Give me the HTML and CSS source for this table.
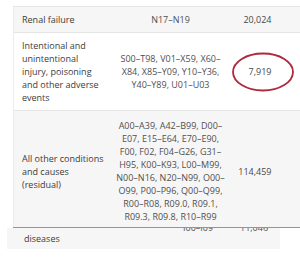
FILE: index.html
```html
<!DOCTYPE html>
<html>
<head>
<meta charset="utf-8">
<link rel="stylesheet" href="styles.css">
</head>
<body>
<div class="page">
  <div class="table-wrap">
    <table class="data">
      <colgroup>
        <col class="c1"><col class="c2"><col class="c3">
      </colgroup>
      <tr class="odd">
        <td class="name">Renal failure</td>
        <td class="codes">N17–N19</td>
        <td class="num">20,024</td>
      </tr>
      <tr>
        <td class="name">Intentional and unintentional injury, poisoning and other adverse events</td>
        <td class="codes">S00–T98, V01–X59, X60–X84, X85–Y09, Y10–Y36, Y40–Y89, U01–U03</td>
        <td class="num">7,919</td>
      </tr>
      <tr class="odd last">
        <td class="name">All other conditions and causes (residual)</td>
        <td class="codes">A00–A39, A42–B99, D00–E07, E15–E64, E70–E90, F00, F02, F04–G26, G31–H95, K00–K93, L00–M99, N00–N16, N20–N99, O00–O99, P00–P96, Q00–Q99, R00–R08, R09.0, R09.1, R09.3, R09.8, R10–R99</td>
        <td class="num">114,459</td>
      </tr>
    </table>
    <svg class="circle" width="64" height="40" viewBox="0 0 64 40">
      <ellipse cx="32" cy="20" rx="30" ry="18.5" fill="none" stroke="#b0283b" stroke-width="1.8"/>
    </svg>
  </div>
  <div class="fragment">
    <div class="frag-grid">
      <span class="f-gap"></span>
      <span class="f-codes">I00–I09</span>
      <span class="f-num">11,046</span>
      <span class="f-name">diseases</span>
    </div>
  </div>
</div>
</body>
</html>
```
FILE: styles.css
```css
html, body {
  margin: 0;
  padding: 0;
  background: #ffffff;
}
body {
  font-family: "Open Sans", "DejaVu Sans", sans-serif;
  font-size: 9px;
  line-height: 13px;
  color: #444444;
}
.page {
  padding-top: 6px;
  width: 300px;
  overflow: hidden;
}
.table-wrap {
  position: relative;
  margin-left: 13px;
  width: 287px;
}
.data {
  border-collapse: collapse;
  width: 287px;
  table-layout: fixed;
}
.c1 { width: 100px; }
.c2 { width: 114px; }
.c3 { width: 73px; }
.data td {
  padding: 6px 8px;
  vertical-align: middle;
  border-top: 1px solid #e6e6e6;
  border-left: 1px solid #ececec;
}
.data td + td {
  border-left: none;
}
.data td.codes {
  padding-left: 2px;
  padding-right: 2px;
}
.data tr {
  background: #ffffff;
}
.data tr.odd {
  background: #f6f6f6;
}
.data tr.last td {
  border-bottom: 1px solid #8499ad;
  padding-top: 8px;
  padding-bottom: 4px;
}
.name {
  color: #3c3c3c;
  text-align: left;
}
.codes {
  color: #505050;
  text-align: center;
}
.data td.num {
  color: #484848;
  text-align: right;
  padding-right: 29px;
}
.circle {
  position: absolute;
  left: 218px;
  top: 46px;
}
.fragment {
  margin-left: 7px;
  width: 273px;
  height: 21px;
  background: #f6f6f6;
  overflow: hidden;
}
.frag-grid {
  display: grid;
  grid-template-columns: 159px 57px auto;
  padding-left: 17px;
  margin-top: -7px;
  color: #505050;
}
.f-gap {
  grid-column: 1;
}
.f-codes {
  grid-column: 2;
}
.f-num {
  grid-column: 3;
}
.f-name {
  grid-column: 1;
  color: #3c3c3c;
  margin-top: -2px;
}
```
